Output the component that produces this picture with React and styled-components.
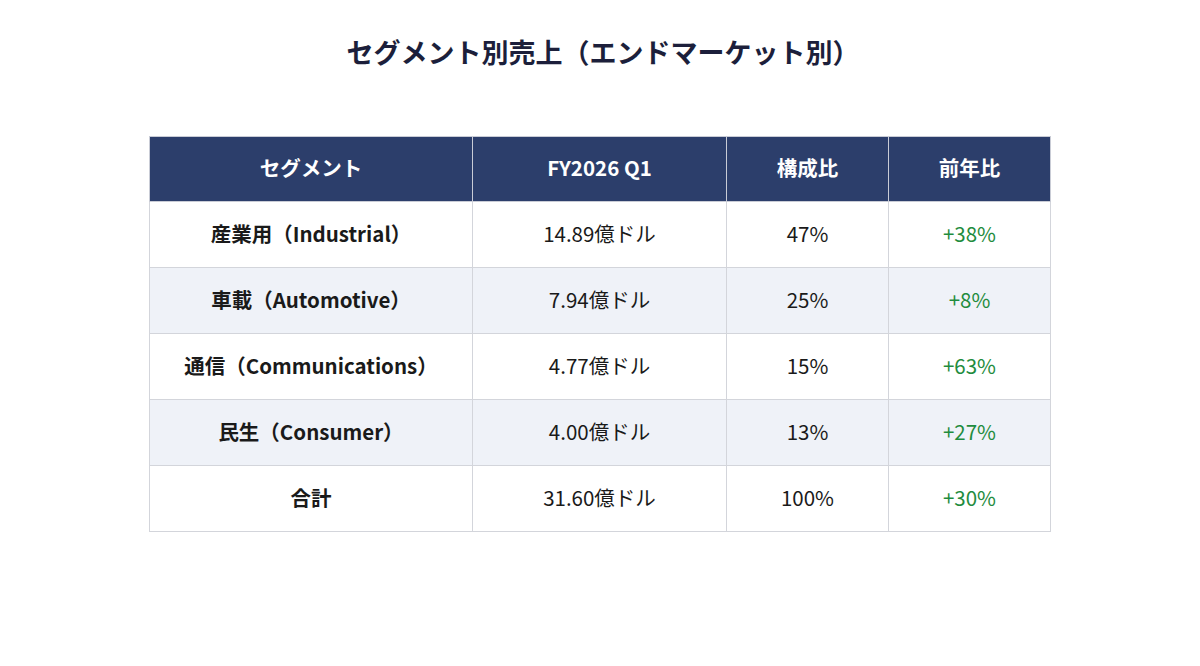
import React from 'react'
import styled, { createGlobalStyle } from 'styled-components'

const GlobalStyle = createGlobalStyle`
  body {
    margin: 0;
    background: #ffffff;
    font-family: "Noto Sans CJK JP", "Noto Sans", sans-serif;
  }
`

const Page = styled.div`
  width: 1200px;
  height: 666px;
  display: flex;
  flex-direction: column;
  align-items: center;
  padding-top: 33px;
  box-sizing: border-box;
`

const Title = styled.h1`
  margin: 0;
  font-size: 27px;
  line-height: 38px;
  font-weight: 700;
  color: #1c1f3b;
  transform: translateX(3px);
`

const Table = styled.table`
  margin-top: 65px;
  width: 902px;
  border-collapse: collapse;
  table-layout: fixed;
  font-size: 20.5px;
`

const HeadCell = styled.th`
  height: 65px;
  padding: 0 0 4px;
  box-sizing: border-box;
  background: #2c3e6b;
  color: #ffffff;
  font-weight: 700;
  text-align: center;
  border: 1px solid #c9ccd6;
`

const Row = styled.tr`
  background: ${p => (p.$alt ? '#eff2f8' : '#ffffff')};
`

const Cell = styled.td`
  height: 66px;
  padding: 0 0 4px;
  box-sizing: border-box;
  text-align: center;
  border: 1px solid #d3d5db;
  color: ${p => (p.$up ? '#1f8c3e' : '#1a1a1a')};
  font-weight: ${p => (p.$bold ? 700 : 400)};
`

const rows = [
  ['産業用（Industrial）', '14.89億ドル', '47%', '+38%'],
  ['車載（Automotive）', '7.94億ドル', '25%', '+8%'],
  ['通信（Communications）', '4.77億ドル', '15%', '+63%'],
  ['民生（Consumer）', '4.00億ドル', '13%', '+27%'],
  ['合計', '31.60億ドル', '100%', '+30%'],
]

export default function App() {
  return (
    <Page>
      <GlobalStyle />
      <Title>セグメント別売上（エンドマーケット別）</Title>
      <Table>
        <colgroup>
          <col style={{ width: 323 }} />
          <col style={{ width: 254 }} />
          <col style={{ width: 162 }} />
          <col style={{ width: 162 }} />
        </colgroup>
        <thead>
          <tr>
            <HeadCell>セグメント</HeadCell>
            <HeadCell>FY2026 Q1</HeadCell>
            <HeadCell>構成比</HeadCell>
            <HeadCell>前年比</HeadCell>
          </tr>
        </thead>
        <tbody>
          {rows.map((r, i) => (
            <Row key={r[0]} $alt={i % 2 === 1}>
              <Cell $bold>{r[0]}</Cell>
              <Cell>{r[1]}</Cell>
              <Cell>{r[2]}</Cell>
              <Cell $up>{r[3]}</Cell>
            </Row>
          ))}
        </tbody>
      </Table>
    </Page>
  )
}
